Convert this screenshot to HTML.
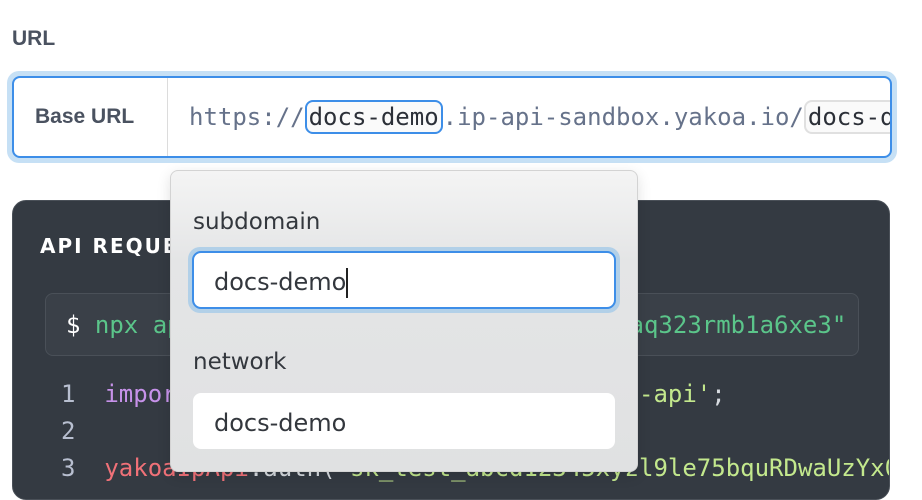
<!DOCTYPE html>
<html><head><meta charset="utf-8"><style>
*{box-sizing:border-box;margin:0;padding:0}
body{width:922px;height:486px;overflow:hidden;background:#fff;font-family:"Liberation Sans","DejaVu Sans",sans-serif;position:relative}
.mono{font-family:"DejaVu Sans Mono","Liberation Mono",monospace}
.lbl{position:absolute;left:12px;top:27px;font-size:21px;font-weight:bold;color:#4a5260;font-family:"Liberation Sans",sans-serif}
.ring{position:absolute;left:7px;top:71px;width:890px;height:92px;border-radius:12px;background:#c6e0f5}
.box{position:absolute;left:12px;top:76px;width:880px;height:82px;border:2px solid #3d8ee8;border-radius:8px;background:#fff;overflow:hidden}
.base{position:absolute;left:0;top:0;width:154px;height:78px;border-right:1.5px solid #dcdcdc;font-family:"Liberation Sans",sans-serif;font-weight:bold;font-size:21px;color:#4a5260;line-height:78px;padding-left:21px}
.url{position:absolute;left:175px;top:0;line-height:78px;font-size:24px;color:#66728a;white-space:nowrap}
.chip{display:inline-block;line-height:30px;border:2px solid #3d8ee8;border-radius:8px;padding:0 2px;color:#2c3038;background:#fafafa}
.chip2{border-color:#e0e0e0}
.dark{position:absolute;left:12px;top:200px;width:878px;height:300px;background:#343a42;border-radius:14px;border:1px solid #4a5058;overflow:hidden}
.title{position:absolute;left:27px;top:33px;color:#fff;font-weight:bold;font-size:20px;letter-spacing:2px;font-family:"DejaVu Sans",sans-serif}
.cmd{position:absolute;left:32px;top:92px;width:814px;height:63px;background:#3a4048;border:1.5px solid #4a5058;border-radius:8px;line-height:62px;padding-left:20px;font-size:24px;color:#5bc58a;white-space:nowrap;overflow:hidden}
.line{position:absolute;left:48px;font-size:24px;white-space:nowrap;color:#d7dbe0}
.pop{position:absolute;left:170px;top:170px;width:468px;height:302px;border:1.5px solid #d3d3d3;border-radius:8px;background:linear-gradient(#f4f4f4,#e4e5e6 30%,#e0e1e2);box-shadow:0 4px 14px rgba(0,0,0,.12)}
.pl{position:absolute;left:22px;font-size:23px;color:#33373d;font-family:"DejaVu Sans",sans-serif}
.in1{position:absolute;left:17px;top:76px;width:432px;height:66px;border-radius:12px;background:#b2d0e8}
.in1 div{position:absolute;left:4px;top:4px;width:424px;height:58px;border:2px solid #3d8ee8;border-radius:9px;background:#fff;padding-left:20px;line-height:58px;font-size:24px;color:#33373d;font-family:"DejaVu Sans",sans-serif}
.in2{position:absolute;left:22px;top:222px;width:422px;height:56px;border-radius:8px;background:#fff;padding-left:21px;line-height:60px;font-size:24px;color:#33373d;font-family:"DejaVu Sans",sans-serif}
</style></head><body>
<div class="lbl">URL</div>
<div class="ring"></div>
<div class="box">
 <div class="base">Base URL</div>
 <div class="url mono">https://<span class="chip">docs-demo</span>.ip-api-sandbox.yakoa.io/<span class="chip chip2">docs-demo</span></div>
</div>
<div class="dark">
 <div class="title">API REQUEST</div>
 <div class="cmd mono"><span style="color:#fff">$</span> npx api install "@yakoa/ip-api@1.0#c4aq323rmb1a6xe3"</div>
 <div class="line mono" style="top:179px"><span style="color:#b8bfd0">1</span>&nbsp;&nbsp;<span style="color:#c792ea">import</span> yakoaIpApi from <span style="color:#c3e88d">'@api/yakoa-ip-api'</span>;</div>
 <div class="line mono" style="top:216px"><span style="color:#b8bfd0">2</span></div>
 <div class="line mono" style="top:253px"><span style="color:#b8bfd0">3</span>&nbsp;&nbsp;<span style="color:#f07178">yakoaIpApi</span>.auth(<span style="color:#c3e88d">'sk_test_abcd12345xyzl9le75bquRDwaUzYx0'</span>);</div>
</div>
<div class="pop">
 <div class="pl" style="top:38px">subdomain</div>
 <div class="in1"><div>docs-demo<span style="display:inline-block;width:1.5px;height:30px;background:#222;vertical-align:middle"></span></div></div>
 <div class="pl" style="top:178px">network</div>
 <div class="in2">docs-demo</div>
</div>
</body></html>
